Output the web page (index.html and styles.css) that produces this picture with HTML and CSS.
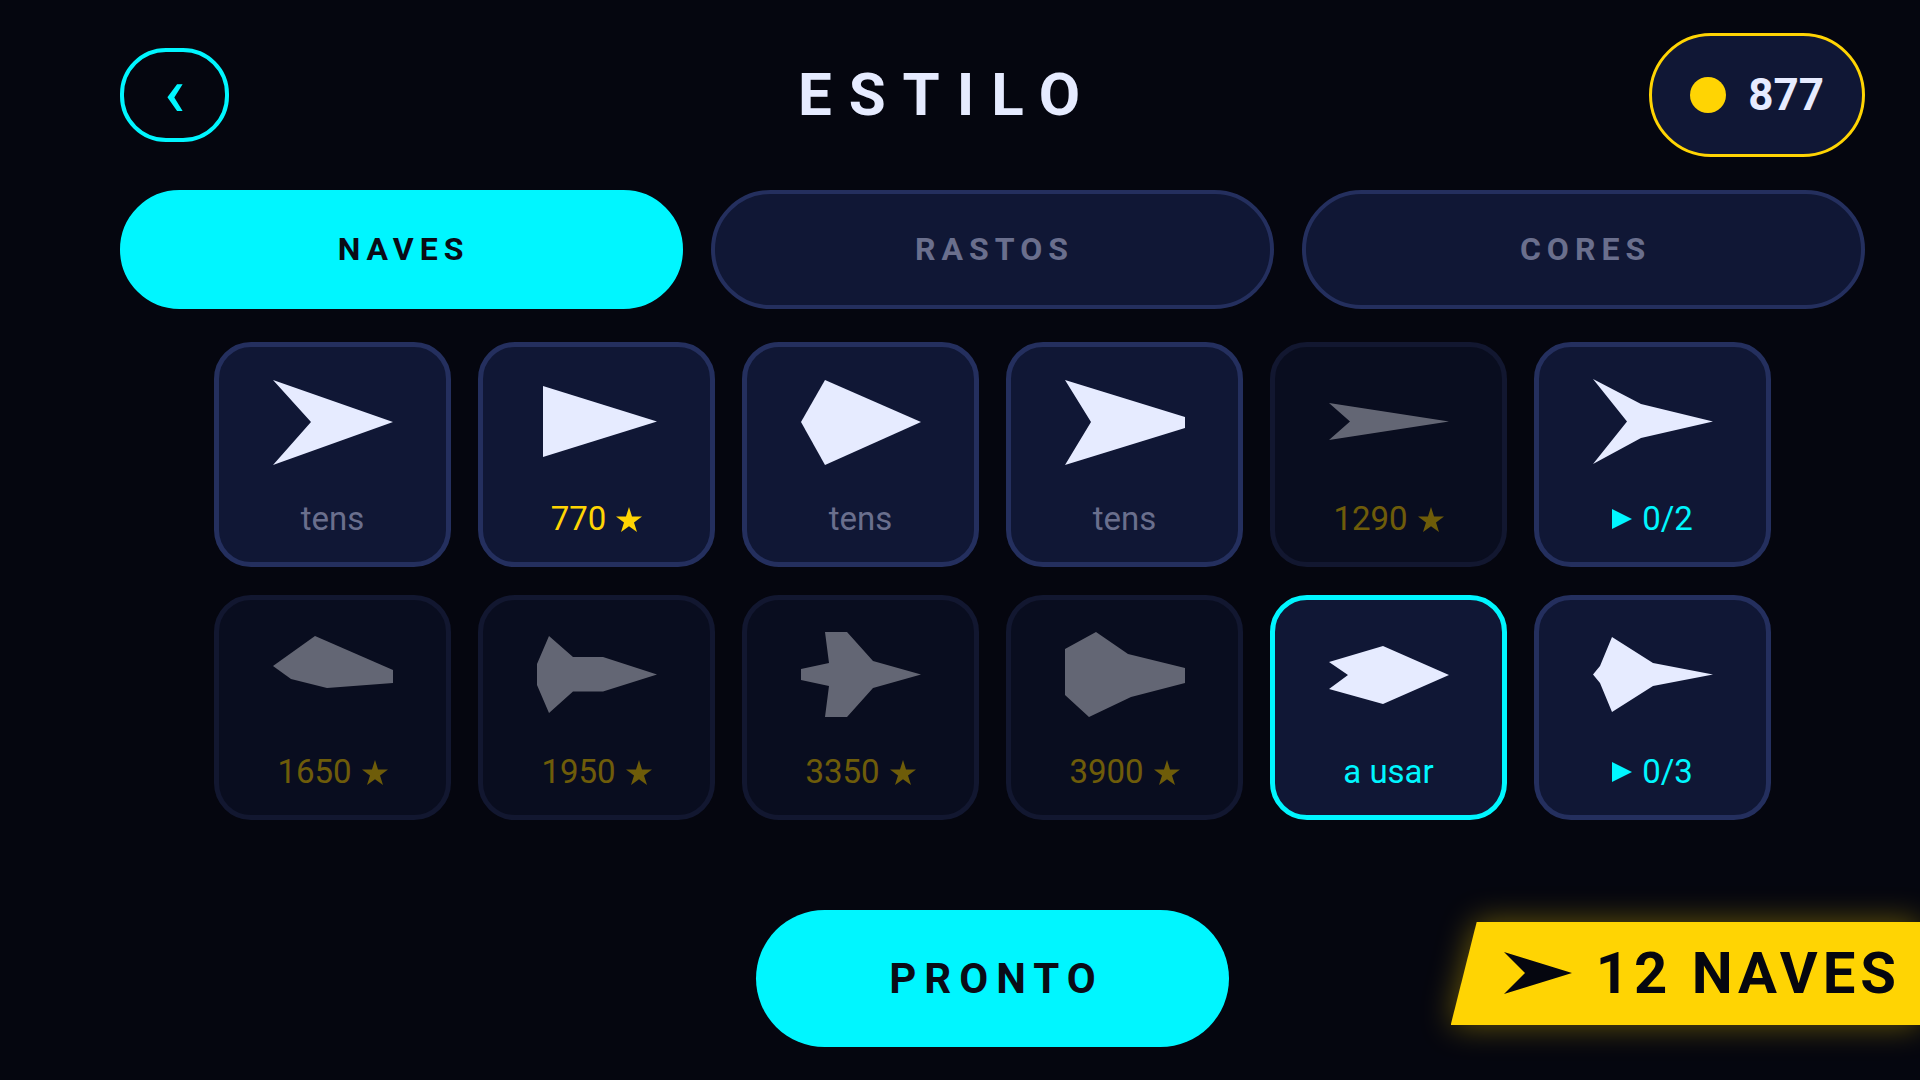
FILE: index.html
```
<!DOCTYPE html>
<html lang="pt">
<head>
  <meta charset="UTF-8">
  <meta name="viewport" content="width=device-width, initial-scale=1">
  <title>Estilo</title>
  <link rel="stylesheet" href="styles.css">
</head>
<body>
  <!-- shared label icons -->
  <svg class="sprites" aria-hidden="true">
    <symbol id="star" viewBox="0 0 26 25">
      <path d="M13 0L16 9.500H26L18 15.500L21 25L13 19.200L5 25L8 15.500L0 9.500H10Z"/>
    </symbol>
    <symbol id="play" viewBox="0 0 20 20">
      <path d="M0 0L20 10L0 20Z"/>
    </symbol>
  </svg>

  <main class="screen">
    <header class="topbar">
      <button class="back" type="button" aria-label="Voltar">‹</button>
      <h1 class="title">ESTILO</h1>
      <div class="wallet">
        <span class="coin"></span>
        <span>877</span>
      </div>
    </header>

    <div class="tabs" role="tablist">
      <button class="tab active" type="button" role="tab" aria-selected="true">NAVES</button>
      <button class="tab" type="button" role="tab" aria-selected="false">RASTOS</button>
      <button class="tab" type="button" role="tab" aria-selected="false">CORES</button>
    </div>

    <div class="ships">
      <button class="card" type="button">
        <svg class="ship" viewBox="0 0 120 86"><polygon points="0,1 120,43 0,86 38,43"/></svg>
        <span class="label">tens</span>
      </button>
      <button class="card" type="button">
        <svg class="ship" viewBox="0 0 120 86"><polygon points="6,7 120,42.500 6,78"/></svg>
        <span class="label price">770 <svg class="star"><use href="#star"/></svg></span>
      </button>
      <button class="card" type="button">
        <svg class="ship" viewBox="0 0 120 86"><polygon points="24,1 120,43 24,86 0,43"/></svg>
        <span class="label">tens</span>
      </button>
      <button class="card" type="button">
        <svg class="ship" viewBox="0 0 120 86"><polygon points="0,1 120,38 120,49 0,86 26,43"/></svg>
        <span class="label">tens</span>
      </button>
      <button class="card" type="button" disabled>
        <svg class="ship" viewBox="0 0 120 86"><polygon points="0,24 120,42.500 0,61 21,42.500"/></svg>
        <span class="label price">1290 <svg class="star"><use href="#star"/></svg></span>
      </button>
      <button class="card" type="button">
        <svg class="ship" viewBox="0 0 120 86"><polygon points="0,0 48,25 120,42.500 48,59 0,85 34,42.500"/></svg>
        <span class="label ad"><svg class="play"><use href="#play"/></svg> 0/2</span>
      </button>

      <button class="card" type="button" disabled>
        <svg class="ship" viewBox="0 0 120 86"><polygon points="0,34 42,4 120,38 120,51 54,56 18,47"/></svg>
        <span class="label price">1650 <svg class="star"><use href="#star"/></svg></span>
      </button>
      <button class="card" type="button" disabled>
        <svg class="ship" viewBox="0 0 120 86"><polygon points="0,32 12,4 36,25 66,25 120,42.500 66,59.500 36,59.500 12,81 0,53"/></svg>
        <span class="label price">1950 <svg class="star"><use href="#star"/></svg></span>
      </button>
      <button class="card" type="button" disabled>
        <svg class="ship" viewBox="0 0 120 86"><polygon points="24,0 46,0 72,29 120,42.500 72,56 46,85 24,85 28,54 0,48 0,37 28,31"/></svg>
        <span class="label price">3350 <svg class="star"><use href="#star"/></svg></span>
      </button>
      <button class="card" type="button" disabled>
        <svg class="ship" viewBox="0 0 120 86"><polygon points="0,17 31,0 63,22 120,36 120,51 66,65 24,85 0,63"/></svg>
        <span class="label price">3900 <svg class="star"><use href="#star"/></svg></span>
      </button>
      <button class="card selected" type="button">
        <svg class="ship" viewBox="0 0 120 86"><polygon points="0,30 54,14 120,43 54,72 0,57 19,43"/></svg>
        <span class="label">a usar</span>
      </button>
      <button class="card" type="button">
        <svg class="ship" viewBox="0 0 120 86"><polygon points="0,42.500 7,34 19,5 60,31 120,42.500 60,54 19,80 7,51"/></svg>
        <span class="label ad"><svg class="play"><use href="#play"/></svg> 0/3</span>
      </button>
    </div>

    <button class="done" type="button">PRONTO</button>
  </main>

  <div class="banner">
    <div class="banner-shape">
      <svg class="banner-ship" viewBox="0 0 68 42"><polygon points="0,0 68,21 0,42 21,21"/></svg>
      <span>12 NAVES</span>
    </div>
  </div>
</body>
</html>
```
FILE: styles.css
```
:root {
  --bg: #05060f;
  --panel: #101735;
  --line: #242f5e;
  --text: #e6ebff;
  --muted: #6a6f8d;
  --cyan: #00f6ff;
  --gold: #ffd403;
}

* {
  box-sizing: border-box;
}

body {
  margin: 0;
  background: var(--bg);
  color: var(--text);
  font-family: Roboto, "Liberation Sans", sans-serif;
  overflow-x: hidden;
}

button {
  font-family: inherit;
  margin: 0;
  cursor: pointer;
}

.sprites {
  display: none;
}

.screen {
  display: flex;
  flex-direction: column;
  gap: 33px;
  min-height: 100vh;
  padding: 33px 55px 33px 120px;
}

/* Top bar */
.topbar {
  display: flex;
  align-items: center;
  justify-content: space-between;
}

.back {
  padding: 12px 40px 16px;
  border: 4px solid var(--cyan);
  border-radius: 46px;
  background: none;
  color: var(--cyan);
  font-size: 68px;
  font-weight: 500;
  line-height: 58px;
}

.title {
  margin: 0;
  font-size: 60px;
  font-weight: 700;
  line-height: 72px;
  letter-spacing: 17px;
  text-indent: 17px;
}

.wallet {
  display: flex;
  align-items: center;
  gap: 22px;
  padding: 32px 38px;
  border: 3px solid var(--gold);
  border-radius: 62px;
  background: var(--panel);
  font-size: 44px;
  font-weight: 700;
  line-height: 54px;
}

.coin {
  width: 36px;
  height: 36px;
  border-radius: 50%;
  background: var(--gold);
}

/* Tabs */
.tabs {
  display: grid;
  grid-template-columns: repeat(3, 1fr);
  gap: 28px;
}

.tab {
  padding: 36px 20px;
  border: 4px solid var(--line);
  border-radius: 60px;
  background: var(--panel);
  color: var(--muted);
  font-size: 32px;
  font-weight: 700;
  line-height: 39px;
  letter-spacing: 6px;
  text-indent: 4px;
}

.tab.active {
  border-color: var(--cyan);
  background: var(--cyan);
  color: #0a0c16;
}

/* Ship grid */
.ships {
  display: grid;
  grid-template-columns: repeat(6, minmax(0, 237px));
  gap: 28px 27px;
  flex: 1;
  align-content: start;
  justify-content: center;
}

.card {
  display: flex;
  flex-direction: column;
  align-items: center;
  gap: 35px;
  padding: 32px 0 24px;
  border: 5px solid var(--line);
  border-radius: 37px;
  background: var(--panel);
  color: var(--muted);
}

.card:disabled {
  opacity: 0.42;
  cursor: default;
}

.card.selected {
  border-color: var(--cyan);
  color: var(--cyan);
}

.ship {
  width: 120px;
  height: 86px;
  fill: var(--text);
}

.label {
  display: flex;
  align-items: center;
  gap: 10px;
  font-size: 33px;
  font-weight: 400;
  line-height: 38px;
}

.label svg {
  fill: currentColor;
}

.price {
  color: var(--gold);
}

.ad {
  color: var(--cyan);
}

.star {
  width: 26px;
  height: 25px;
}

.play {
  width: 20px;
  height: 20px;
}

.done {
  align-self: center;
  padding: 40px 125px;
  border: 0;
  border-radius: 69px;
  background: var(--cyan);
  color: #0a0c16;
  font-size: 42px;
  font-weight: 700;
  line-height: 57px;
  letter-spacing: 8px;
  text-indent: 8px;
}

/* Corner banner */
.banner {
  position: fixed;
  right: 0;
  bottom: 55px;
  filter: drop-shadow(0 0 16px rgba(255, 212, 3, 0.4));
}

.banner-shape {
  display: flex;
  align-items: center;
  gap: 24px;
  padding: 16px 19px 17px 53px;
  background: var(--gold);
  clip-path: polygon(26px 0, 100% 0, 100% 100%, 0 100%);
  color: var(--bg);
  font-size: 58px;
  font-weight: 700;
  line-height: 70px;
  letter-spacing: 5px;
}

.banner-ship {
  width: 68px;
  height: 42px;
  fill: var(--bg);
}
```
